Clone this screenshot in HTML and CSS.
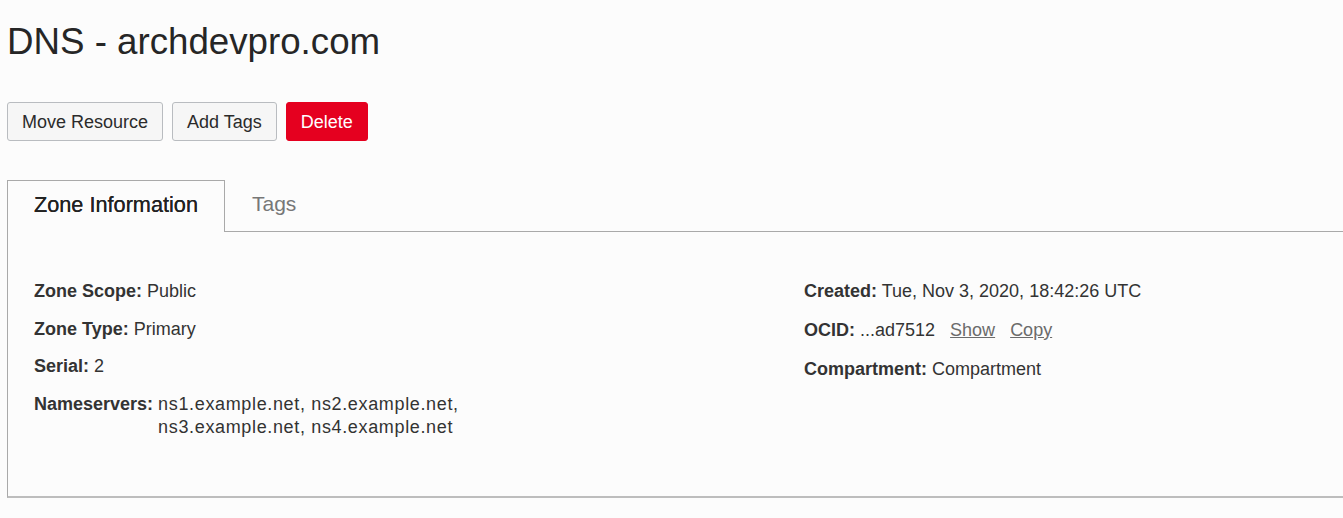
FILE: index.html
```html
<!DOCTYPE html>
<html lang="en">

<head>
    <meta charset="UTF-8">
    <meta name="viewport" content="width=device-width, initial-scale=1.0">
    <title>DNS - archdevpro.com</title>
    <link rel="stylesheet" href="styles.css">
</head>

<body>
    <div class="page">
        <h1>DNS - archdevpro.com</h1>
        <div class="actions">
            <button class="btn">Move Resource</button>
            <button class="btn">Add Tags</button>
            <button class="btn danger">Delete</button>
        </div>
        <div class="tabs">
            <div class="tab active">Zone Information</div>
            <div class="tab">Tags</div>
        </div>
        <div class="panel">
            <div class="col">
                <div class="row"><b>Zone Scope:</b> Public</div>
                <div class="row"><b>Zone Type:</b> Primary</div>
                <div class="row"><b>Serial:</b> 2</div>
                <div class="row ns">
                    <b>Nameservers:</b>
                    <span class="ns-list">ns1.example.net, ns2.example.net,<br>ns3.example.net, ns4.example.net</span>
                </div>
            </div>
            <div class="col right">
                <div class="row"><b>Created:</b> Tue, Nov 3, 2020, 18:42:26 UTC</div>
                <div class="row"><b>OCID:</b> ...ad7512 <a href="#" class="link">Show</a> <a href="#" class="link">Copy</a></div>
                <div class="row"><b>Compartment:</b> Compartment</div>
            </div>
        </div>
    </div>
</body>

</html>
```

FILE: styles.css
```css
*{
    box-sizing: border-box;
}
body{
    margin:0;
    background:#fcfcfc;
    color:#2b2b2b;
    font-family:"Liberation Sans", Arial, sans-serif;
    overflow:hidden;
}
.page{
    padding:22px 0 0 7px;
}
h1{
    margin:0;
    font-size:36.7px;
    font-weight:normal;
    line-height:40px;
    color:#262626;
}
.actions{
    display:flex;
    gap:9px;
    margin-top:40px;
}
.btn{
    height:39px;
    padding:2px 14px 0;
    font-family:inherit;
    font-size:18px;
    color:#2b2b2b;
    background:#f6f6f6;
    border:1px solid #b9bcc0;
    border-radius:3px;
}
.btn.danger{
    background:#e5001f;
    border-color:#e5001f;
    color:#fff;
}
.tabs{
    display:flex;
    margin-top:39px;
    border-bottom:1px solid #a9a9a9;
}
.tab{
    height:51px;
    padding:0 26px 4px;
    display:flex;
    align-items:center;
    font-size:21px;
    color:#777;
    border:1px solid transparent;
    border-bottom:none;
}
.tab.active{
    width:218px;
    height:52px;
    margin-bottom:-1px;
    font-size:21.7px;
    color:#222;
    background:#fcfcfc;
    border-color:#a9a9a9;
    text-shadow:0 0 0.4px #222;
}
.panel{
    display:grid;
    grid-template-columns:770px 1fr;
    height:266px;
    padding:48px 0 0 26px;
    border-left:1px solid #a9a9a9;
    border-bottom:2px solid #bdbdbd;
}
.row{
    font-size:18px;
    line-height:23px;
    color:#333;
    margin-bottom:14.5px;
}
.right .row{
    margin-bottom:16px;
}
.ns{
    display:flex;
    gap:5px;
}
.ns-list{
    letter-spacing:0.65px;
}
.link{
    color:#6b6b6b;
    margin-left:10px;
}
```
